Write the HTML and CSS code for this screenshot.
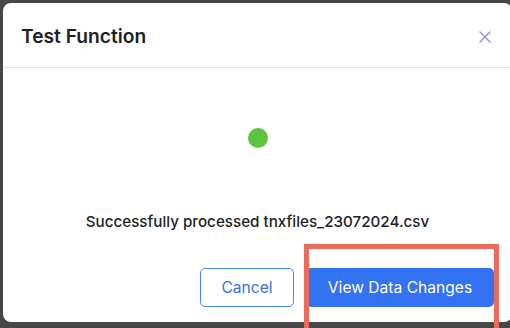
FILE: index.html
```html
<!DOCTYPE html>
<html>
<head>
<meta charset="utf-8">
<link rel="stylesheet" href="styles.css">
</head>
<body>
<div class="modal">
  <div class="modal-header">
    <h2 class="modal-title">Test Function</h2>
    <button class="close-btn" aria-label="Close">
      <svg width="12" height="12" viewBox="0 0 12 12"><path d="M0.5 0.5L11.5 11.5M11.5 0.5L0.5 11.5" stroke="#8a8fd6" stroke-width="1.3" fill="none"/></svg>
    </button>
  </div>
  <div class="modal-body">
    <div class="status-dot"></div>
    <p class="status-text">Successfully processed tnxfiles_23072024.csv</p>
  </div>
  <div class="modal-footer">
    <button class="btn btn-outline">Cancel</button>
    <button class="btn btn-primary">View Data Changes</button>
  </div>
</div>
<div class="highlight"></div>
</body>
</html>
```
FILE: styles.css
```css
html, body {
  margin: 0;
  padding: 0;
  height: 100%;
  overflow: hidden;
}
body {
  background: #474747;
  font-family: Inter, "Noto Sans", sans-serif;
  padding: 3px 0 0 3px;
  box-sizing: border-box;
  position: relative;
}
.modal {
  width: 509px;
  height: 319px;
  background: #ffffff;
  border-radius: 8px;
  display: flex;
  flex-direction: column;
  box-sizing: border-box;
}
.modal-header {
  height: 65px;
  box-sizing: border-box;
  border-bottom: 1px solid #dedff0;
  display: flex;
  align-items: center;
  justify-content: space-between;
  padding: 2px 21px 0 18px;
}
.modal-title {
  margin: 0;
  font-size: 19.2px;
  font-weight: 600;
  color: #1f1f23;
}
.close-btn {
  background: none;
  border: none;
  padding: 0;
  width: 12px;
  height: 12px;
  display: flex;
  margin-top: 1px;
}
.modal-body {
  display: flex;
  flex-direction: column;
  align-items: center;
  padding-top: 60px;
}
.status-dot {
  width: 20px;
  height: 20px;
  border-radius: 50%;
  background: #5cc43e;
}
.status-text {
  margin: 64px 0 0;
  font-size: 15.2px;
  line-height: 20px;
  font-weight: 500;
  color: #222226;
}
.modal-footer {
  display: flex;
  justify-content: flex-end;
  gap: 12px;
  padding: 36px 18px 0 0;
}
.btn {
  height: 39px;
  border-radius: 5px;
  font-family: Inter, "Noto Sans", sans-serif;
  font-size: 15.6px;
  font-weight: 400;
  box-sizing: border-box;
  cursor: pointer;
}
.btn-outline {
  width: 94px;
  background: #ffffff;
  border: 1px solid #4a84f0;
  color: #3572ea;
}
.btn-primary {
  width: 188px;
  background: #3372f3;
  border: none;
  color: #ffffff;
}
.highlight {
  position: absolute;
  left: 304px;
  top: 244px;
  width: 195px;
  height: 84px;
  border: 5px solid #ec6a5a;
  border-bottom: none;
  box-sizing: border-box;
  pointer-events: none;
}
```
